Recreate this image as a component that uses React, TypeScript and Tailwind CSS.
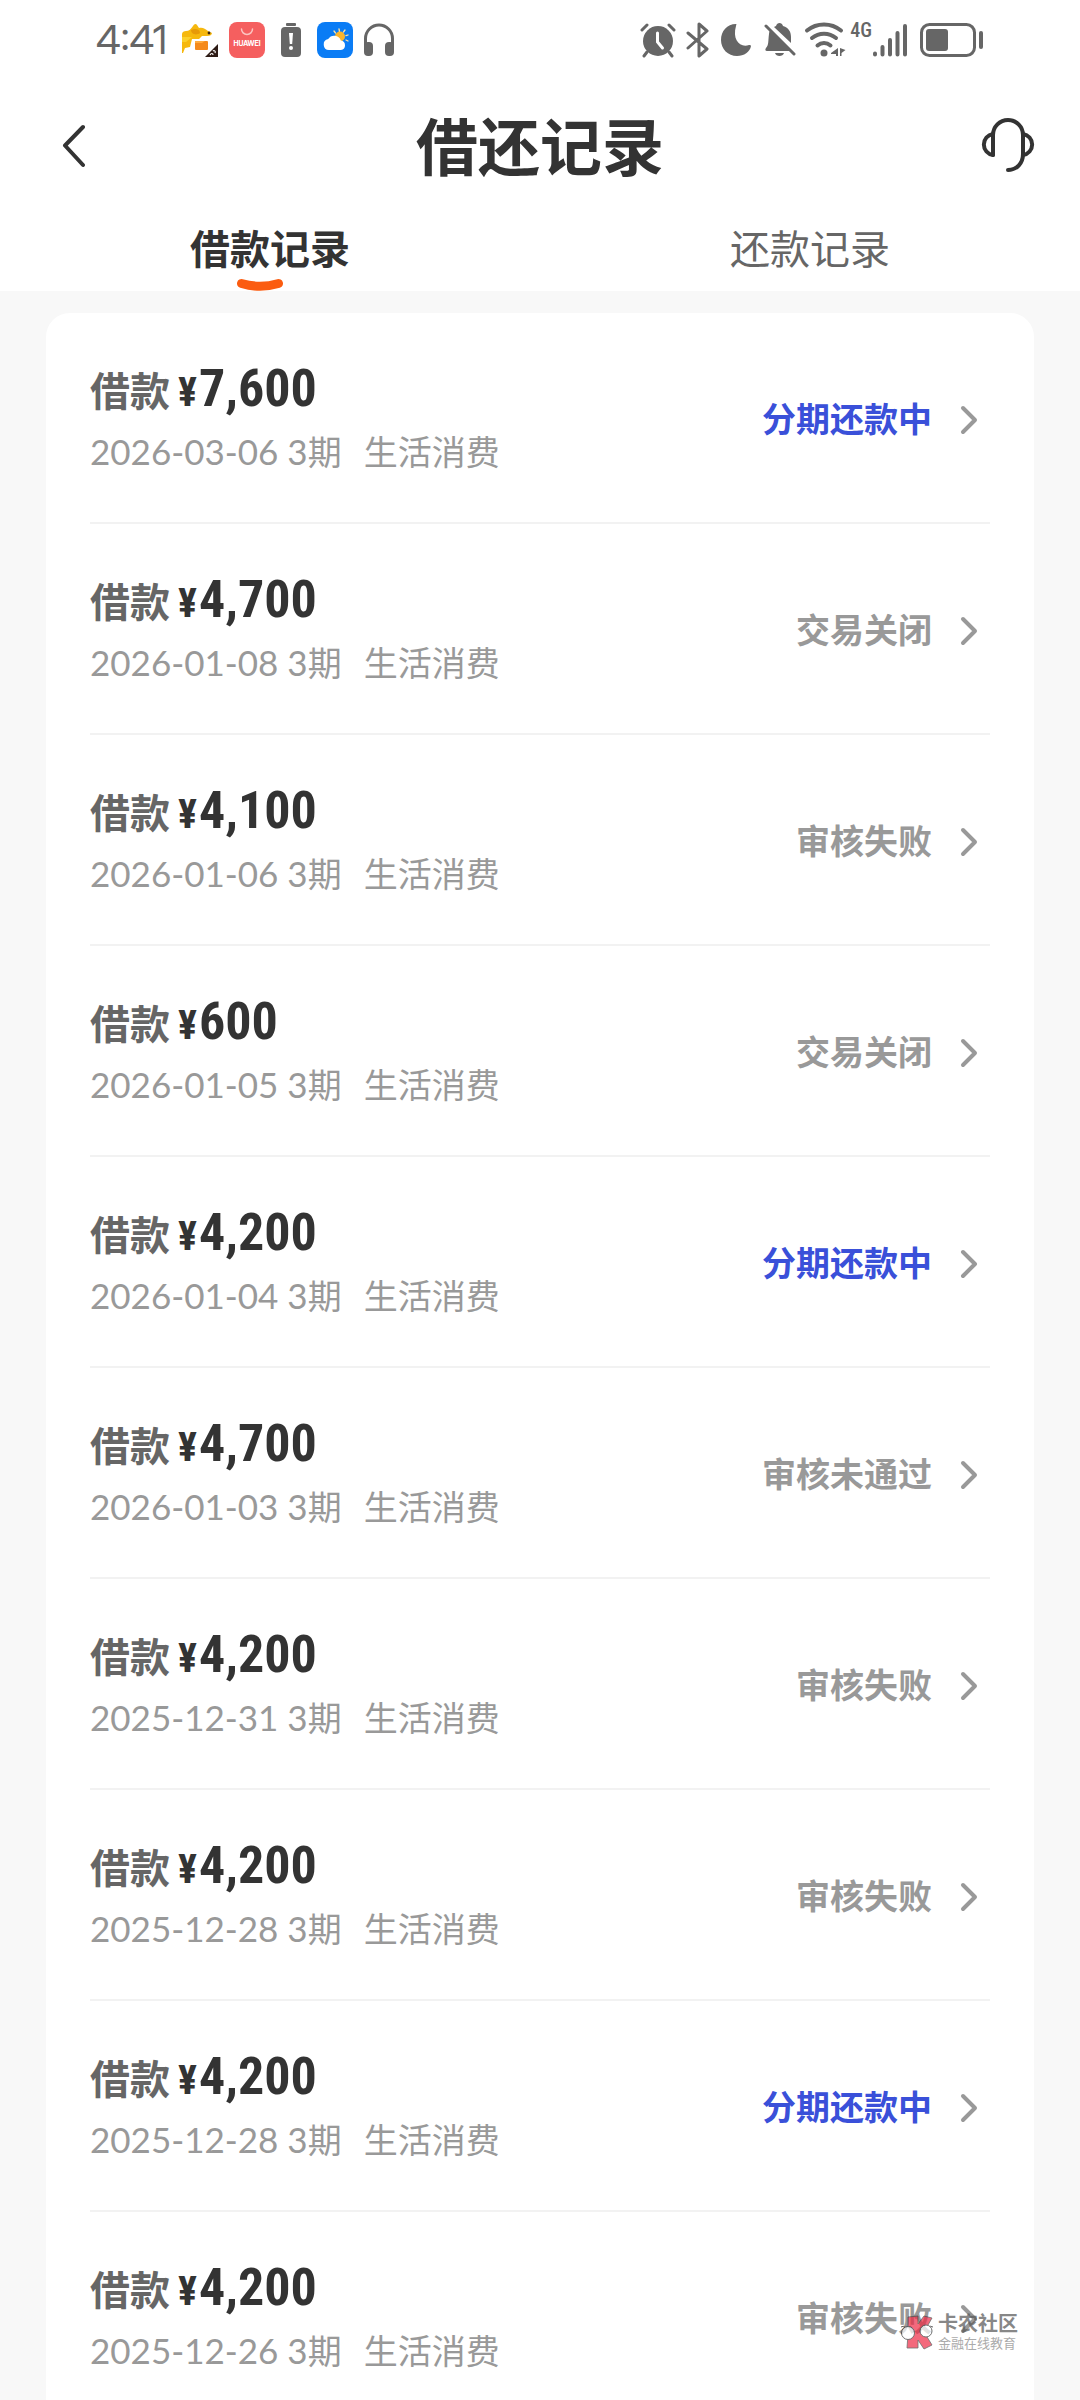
import type { ReactNode } from "react";
import clsx from "clsx";

type Status = "分期还款中" | "交易关闭" | "审核失败" | "审核未通过";

interface LoanRecord {
  amount: string;
  date: string;
  status: Status;
}

const records: LoanRecord[] = [
  { amount: "7,600", date: "2026-03-06", status: "分期还款中" },
  { amount: "4,700", date: "2026-01-08", status: "交易关闭" },
  { amount: "4,100", date: "2026-01-06", status: "审核失败" },
  { amount: "600", date: "2026-01-05", status: "交易关闭" },
  { amount: "4,200", date: "2026-01-04", status: "分期还款中" },
  { amount: "4,700", date: "2026-01-03", status: "审核未通过" },
  { amount: "4,200", date: "2025-12-31", status: "审核失败" },
  { amount: "4,200", date: "2025-12-28", status: "审核失败" },
  { amount: "4,200", date: "2025-12-28", status: "分期还款中" },
  { amount: "4,200", date: "2025-12-26", status: "审核失败" },
];

const sansClass =
  "font-['Inter_Display','Inter','Noto_Sans_CJK_SC',sans-serif]";
const amountClass =
  "font-['Roboto_Condensed','Roboto','Noto_Sans_CJK_SC',sans-serif]";
const dateClass = "font-['Lato','Noto_Sans_CJK_SC',sans-serif]";

function CourierIcon() {
  return (
    <svg viewBox="0 0 38 36" className="h-9 w-[38px]" aria-hidden="true">
      <path
        d="M1 31V12c0-2 2-3 4-3 3 0 5-2 7-5 1-2 3-3 4-1l2 3c4-1 6 1 9 3l4 2c0 2-2 3-5 3h-5l-3 3H11l-2 8-5 1-2 5z"
        fill="#f6b80e"
      />
      <path d="M10 8c4-2 9-1 9 3-4 3-9 1-9-3z" fill="#e79a08" />
      <path d="M1 15h10l-6 5H1z" fill="#fbd02c" />
      <rect x="14" y="19" width="13" height="9" rx="1" fill="#f58a1b" />
      <path d="M14 19h10l-3 2h-7z" fill="#ffab3e" />
      <circle cx="28" cy="11" r="1.4" fill="#3b2411" />
      <path d="M24 35L37 22v13z" fill="#2e1c16" />
      <path
        d="M29 33c1-2 3-2 3 0m0-4c1-1 3 0 2 2"
        fill="none"
        stroke="#fff"
        strokeWidth="1.2"
      />
    </svg>
  );
}

function AppGalleryIcon() {
  return (
    <span className="flex size-9 flex-col items-center rounded-lg bg-[#f55f5f] text-white">
      <svg viewBox="0 0 36 18" className="h-[18px] w-9" aria-hidden="true">
        <path
          d="M12.500 7a5.500 5.500 0 0 0 11 0"
          fill="none"
          stroke="#fbc4c0"
          strokeWidth="1.5"
          strokeLinecap="round"
        />
      </svg>
      <span className="text-[7px] leading-[8px] font-bold">HUAWEI</span>
    </span>
  );
}

function BatteryAlertIcon() {
  return (
    <svg viewBox="0 0 20 36" className="h-9 w-5" aria-hidden="true">
      <rect x="5" y="1" width="10" height="3" rx="1" fill="#666" />
      <rect x="0" y="5" width="20" height="30" rx="4" fill="#666" />
      <path d="M8 11h4l-.8 11H8.800z" fill="#fff" />
      <circle cx="10" cy="26" r="2" fill="#fff" />
    </svg>
  );
}

function WeatherIcon() {
  return (
    <svg viewBox="0 0 36 36" className="size-9" aria-hidden="true">
      <rect width="36" height="36" rx="8" fill="#0a7cf5" />
      <g stroke="#ffe3a3" strokeWidth="1.3" strokeLinecap="round">
        <path d="M22 7l.5 2.500M28 8l-1.500 2M17 9l1.500 2M31 13l-2 .7M31 19l-2-1" />
      </g>
      <circle cx="23" cy="14.500" r="5" fill="#fbb52c" />
      <path
        d="M12 28a5.500 5.500 0 0 1-.8-10.900 7 7 0 0 1 12.600 1.400 4.800 4.800 0 0 1 .2 9.500z"
        fill="#fff"
      />
    </svg>
  );
}

function HeadphonesIcon() {
  return (
    <svg viewBox="0 0 32 34" className="h-[34px] w-8" aria-hidden="true">
      <path
        d="M2.500 27V15.500a13.500 13.500 0 0 1 27 0V27"
        fill="none"
        stroke="#666"
        strokeWidth="3"
      />
      <rect x="1" y="19" width="9" height="14" rx="4" fill="#666" />
      <rect x="22" y="19" width="9" height="14" rx="4" fill="#666" />
    </svg>
  );
}

function AlarmIcon() {
  return (
    <svg viewBox="0 0 36 36" className="size-9" aria-hidden="true">
      <circle cx="18" cy="19" r="15" fill="#666" />
      <g fill="none" strokeLinecap="round">
        <path d="M2 8l5-5M34 8l-5-5" stroke="#666" strokeWidth="3" />
        <path d="M7 30l-3 4M29 30l3 4" stroke="#666" strokeWidth="3" />
        <path d="M17.500 11v9l5 6" stroke="#fff" strokeWidth="3" />
      </g>
    </svg>
  );
}

function BluetoothIcon() {
  return (
    <svg viewBox="0 0 24 36" className="h-9 w-6" aria-hidden="true">
      <path
        d="M2 11l19 16-8 7V2l8 7L2 26"
        fill="none"
        stroke="#666"
        strokeWidth="3"
        strokeLinecap="round"
        strokeLinejoin="round"
      />
    </svg>
  );
}

function MoonIcon() {
  return (
    <svg viewBox="0 0 32 34" className="h-[34px] w-8" aria-hidden="true">
      <path
        d="M16 1C7 1 1 8 1 17c0 9 7 16 16 16 7 0 13-4 14-10 0-1-1-1-2-1-9 3-17-5-13-19 0-1 1-2 0-2z"
        fill="#666"
      />
    </svg>
  );
}

function BellOffIcon() {
  return (
    <svg viewBox="0 0 32 36" className="h-9 w-8" aria-hidden="true">
      <path
        d="M3 29c-2 0-2-2-1-3 3-3 2-7 3-14 0-2 1-4 2-4l19 21zM12 4c1-4 6-4 7 0 6 2 8 6 8 11v6L10 5zM11 31h9c-1 4-8 4-9 0z"
        fill="#666"
      />
      <path d="M4 2l28 28" stroke="#fff" strokeWidth="3" />
      <path
        d="M2 4l28 28"
        stroke="#666"
        strokeWidth="3"
        strokeLinecap="round"
      />
    </svg>
  );
}

function WifiIcon() {
  return (
    <svg viewBox="0 0 42 36" className="h-9 w-[42px]" aria-hidden="true">
      <g fill="none" stroke="#666" strokeWidth="4" strokeLinecap="round">
        <path d="M3 8.500a27 27 0 0 1 34 0" />
        <path d="M8 16a19 19 0 0 1 24 0" />
        <path d="M13.500 23.500a10 10 0 0 1 13 0" />
      </g>
      <circle cx="20" cy="31" r="3.500" fill="#666" />
      <path d="M34 26v8h-2v-2h-5v-1z" fill="#666" />
      <path d="M36 26v8h1.500v-3l4-3z" fill="#666" />
    </svg>
  );
}

function SignalIcon() {
  return (
    <svg viewBox="0 0 36 36" className="size-9" aria-hidden="true">
      <g stroke="#666" strokeWidth="4" strokeLinecap="round">
        <path d="M3 31.500v1M10.500 25v7.500M18 18v14.500M25.500 11v21.500M33 4v28.500" />
      </g>
    </svg>
  );
}

function BatteryIcon() {
  return (
    <svg viewBox="0 0 64 34" className="h-[34px] w-16" aria-hidden="true">
      <rect
        x="1.500"
        y="1.500"
        width="53"
        height="31"
        rx="8"
        fill="none"
        stroke="#666"
        strokeWidth="3"
      />
      <rect x="6" y="6" width="22" height="22" rx="3" fill="#666" />
      <rect x="59" y="8" width="4" height="18" rx="2" fill="#666" />
    </svg>
  );
}

function StatusBar() {
  return (
    <div className="flex h-20 items-center justify-between px-24 text-[#666]">
      <div className="flex items-center">
        <time className="mr-3.5 text-[40px] leading-none">4:41</time>
        <CourierIcon />
        <span className="ml-2.5">
          <AppGalleryIcon />
        </span>
        <span className="ml-4">
          <BatteryAlertIcon />
        </span>
        <span className="mr-2.5 ml-4">
          <WeatherIcon />
        </span>
        <HeadphonesIcon />
      </div>
      <div className="flex items-center">
        <AlarmIcon />
        <span className="mx-2.5">
          <BluetoothIcon />
        </span>
        <MoonIcon />
        <span className="mr-2 ml-3">
          <BellOffIcon />
        </span>
        <WifiIcon />
        <span
          className={clsx(
            amountClass,
            "ml-1 self-start text-[20px] leading-4 font-medium",
          )}
        >
          4G
        </span>
        <SignalIcon />
        <span className="ml-3">
          <BatteryIcon />
        </span>
      </div>
    </div>
  );
}

function BackIcon() {
  return (
    <svg viewBox="0 0 24 44" className="h-11 w-6" aria-hidden="true">
      <path
        d="M22 3L4 21.500L22 41"
        fill="none"
        stroke="#333"
        strokeWidth="4"
        strokeLinecap="round"
        strokeLinejoin="round"
      />
    </svg>
  );
}

function SupportIcon() {
  return (
    <svg viewBox="0 0 54 56" className="h-14 w-[54px]" aria-hidden="true">
      <g
        fill="none"
        stroke="#333"
        strokeWidth="4"
        strokeLinecap="round"
        strokeLinejoin="round"
      >
        <path d="M12 37V17a15 15 0 0 1 30 0v19c0 9-6 16-15 16" />
        <path d="M12 16a10.600 10.600 0 0 0 0 21" />
        <path d="M42 16a10.600 10.600 0 0 1 0 21" />
      </g>
    </svg>
  );
}

function TitleBar() {
  return (
    <div className="flex h-[132px] items-center justify-between pr-[45px] pl-[61px]">
      <button type="button" aria-label="返回" className="w-[70px]">
        <BackIcon />
      </button>
      <h1 className="pt-1.5 text-[62px] leading-none font-bold text-[#333]">
        借还记录
      </h1>
      <button
        type="button"
        aria-label="客服"
        className="flex w-[86px] justify-end"
      >
        <SupportIcon />
      </button>
    </div>
  );
}

function Tab({ active, children }: { active?: boolean; children: ReactNode }) {
  return (
    <button
      type="button"
      role="tab"
      aria-selected={Boolean(active)}
      className={clsx(
        "relative flex flex-1 items-center justify-center pb-1 text-[40px] leading-none",
        active ? "font-bold text-[#333]" : "text-[#666]",
      )}
    >
      {children}
      {active && (
        <svg
          viewBox="0 0 48 14"
          className="absolute bottom-0 left-1/2 h-3.5 w-12 -translate-x-[34px]"
          aria-hidden="true"
        >
          <path
            d="M5.500 6.500Q24 12 42.500 6.500"
            fill="none"
            stroke="#fb5c10"
            strokeWidth="9"
            strokeLinecap="round"
          />
        </svg>
      )}
    </button>
  );
}

function RecordRow({ amount, date, status }: LoanRecord) {
  return (
    <li className="border-b-2 border-[#f2f2f2] last:border-b-0">
      <button
        type="button"
        className="flex w-full items-center justify-between pt-11 pr-3 pb-10 text-left"
      >
        <span className="flex flex-col">
          <span className="flex h-16 items-baseline leading-none font-bold">
            <span className="text-[40px] text-[#666]">借款</span>
            <span
              className={clsx(
                amountClass,
                "ml-2 flex items-baseline gap-0.5 text-[#333]",
              )}
            >
              <span className="text-[40px]">¥</span>
              <span className="text-[52px] leading-[64px]">{amount}</span>
            </span>
          </span>
          <span
            className={clsx(
              dateClass,
              "flex h-[61px] items-baseline text-[34px] leading-[60px] text-[#999]",
            )}
          >
            <span className="text-[35px]">{date} 3</span>
            <span>期</span>
            <span className="ml-[22px]">生活消费</span>
          </span>
        </span>
        <span className="flex items-center gap-7">
          <span
            className={clsx(
              "text-[34px] leading-none font-bold",
              status === "分期还款中" ? "text-[#3a50d9]" : "text-[#999]",
            )}
          >
            {status}
          </span>
          <svg viewBox="0 0 18 30" className="h-[30px] w-[18px]" aria-hidden="true">
            <path
              d="M3 3l12 12L3 27"
              fill="none"
              stroke="#999"
              strokeWidth="4"
              strokeLinecap="round"
              strokeLinejoin="round"
            />
          </svg>
        </span>
      </button>
    </li>
  );
}

function Watermark() {
  return (
    <div className="absolute right-[62px] bottom-[50px] flex items-center gap-1 opacity-70">
      <svg viewBox="0 0 34 36" className="h-9 w-[34px]" aria-hidden="true">
        <path
          d="M8 3l10-1v8l6-8 8 2-8 14 8 13-8 4-6-9v8H7l1-14z"
          fill="#ef2b45"
          stroke="#333"
          strokeWidth="0.8"
        />
        <path d="M1 13q2-2 5 1M33 13q-3-2-5 1" fill="none" stroke="#222" />
        <circle cx="8" cy="19" r="6.500" fill="#fff" stroke="#333" />
        <circle cx="26" cy="17" r="6" fill="#fff" stroke="#333" />
      </svg>
      <div className="flex flex-col gap-0.5">
        <span className="text-[20px] leading-5 font-bold text-[#555]">
          卡农社区
        </span>
        <span className="text-[13px] leading-[14px] text-[#888]">
          金融在线教育
        </span>
      </div>
    </div>
  );
}

export default function App() {
  return (
    <div
      lang="zh-CN"
      className={clsx(
        sansClass,
        "relative flex h-screen flex-col overflow-hidden bg-[#f8f8f8]",
      )}
    >
      <header className="bg-white">
        <StatusBar />
        <TitleBar />
        <div role="tablist" className="flex h-[79px]">
          <Tab active>借款记录</Tab>
          <Tab>还款记录</Tab>
        </div>
      </header>
      <main className="min-h-0 flex-1 overflow-hidden px-[46px] pt-[22px]">
        <ul className="rounded-3xl bg-white px-11">
          {records.map((record, index) => (
            <RecordRow key={index} {...record} />
          ))}
        </ul>
      </main>
      <Watermark />
    </div>
  );
}
